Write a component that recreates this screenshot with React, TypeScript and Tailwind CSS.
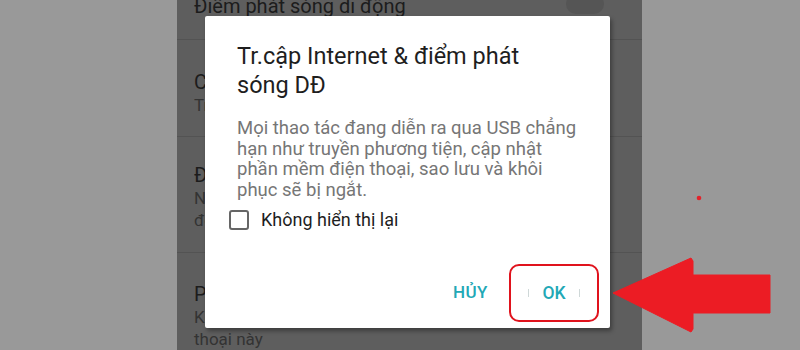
const rows = [
  { title: "Chia sẻ kết nối qua USB", sub: ["Truy cập Internet qua cáp USB"], h: "h-[97px]", pt: "pt-[30px]" },
  { title: "Điểm phát sóng Bluetooth", sub: ["Nhận kết nối Internet của điện thoại", "để dùng trên thiết bị khác"], h: "h-[116px]", pt: "pt-[26px]" },
];

const App = () => {
  return (
    <div
      className="relative flex w-[800px] h-[350px] overflow-hidden bg-[#989898]"
      style={{ fontFamily: "Roboto, 'Noto Sans', sans-serif" }}
    >
      <div className="w-[177px] shrink-0 bg-[#999999]" />

      {/* phone screen with dim overlay */}
      <div className="relative w-[465px] shrink-0 bg-[#5e5e5e] overflow-hidden">
        <div className="flex flex-col">
          <div className="relative h-[40px] border-b border-[#535353] pl-[17px]">
            <div className="-mt-[7px] text-[20px] leading-[26px] text-[#1c1c1c]">Điểm phát sóng di động</div>
            <div className="absolute right-[38px] -top-[6px] w-[38px] h-[20px] rounded-full bg-[#555555]" />
          </div>
          {rows.map((r) => (
            <div key={r.title} className={`${r.h} ${r.pt} border-b border-[#535353] pl-[17px]`}>
              <div className="w-[11px] overflow-hidden whitespace-nowrap">
                <div className="text-[20px] leading-[24px] text-[#1c1c1c]">{r.title}</div>
                {r.sub.map((s) => (
                  <div key={s} className="text-[17px] leading-[22px] text-[#333333]">{s}</div>
                ))}
              </div>
            </div>
          ))}
          <div className="h-[110px] pt-[29px] pl-[17px]">
            <div className="w-[11px] overflow-hidden whitespace-nowrap">
              <div className="text-[20px] leading-[24px] text-[#1c1c1c]">Phạm vi điểm phát sóng</div>
              <div className="text-[17px] leading-[22px] text-[#333333]">Kết nối Internet qua điện</div>
            </div>
            <div className="text-[17px] leading-[22px] text-[#333333]">thoại này</div>
          </div>
        </div>

        {/* dialog */}
        <div className="absolute left-[28px] top-[16px] w-[405px] h-[312px] bg-white rounded-[2px] shadow-[2px_3px_4px_rgba(0,0,0,0.35)] flex flex-col">
          <div className="pl-[32px] pt-[26px] text-[23.5px] leading-[29px] text-[#1e1e1e]">
            Tr.cập Internet &amp; điểm phát
            <br />
            sóng DĐ
          </div>
          <div className="pl-[32px] pt-[18px] text-[18.5px] leading-[20.5px] text-[#767676]">
            Mọi thao tác đang diễn ra qua USB chẳng
            <br />
            hạn như truyền phương tiện, cập nhật
            <br />
            phần mềm điện thoại, sao lưu và khôi
            <br />
            phục sẽ bị ngắt.
          </div>
          <div className="flex items-center pl-[24px] pt-[9px]">
            <div className="w-[20px] h-[20px] rounded-[3px] border-2 border-[#666666]" />
            <span className="ml-[12px] text-[18px] leading-[22px] text-[#1e1e1e]">Không hiển thị lại</span>
          </div>
          <div className="mt-auto flex items-center justify-end pr-[11px] pb-[6px]">
            <button className="text-[17px] font-medium tracking-[0.5px] text-[#22a8b6]">HỦY</button>
            <button className="ml-[21px] w-[90px] h-[58px] rounded-[10px] border-[2.5px] border-[#e0131d] flex items-center justify-center gap-[13px]">
              <span className="w-px h-[8px] bg-[#cfd8d8]" />
              <span className="text-[17.5px] font-medium text-[#22a8b6]">OK</span>
              <span className="w-px h-[8px] bg-[#cfd8d8]" />
            </button>
          </div>
        </div>
      </div>

      <div className="flex-1 bg-[#999999]" />

      {/* annotation arrow */}
      <svg className="absolute left-0 top-0" width="800" height="350" viewBox="0 0 800 350">
        <polygon
          points="613,293 691,258 693,261 693,275 770,275 770,313 693,313 693,329 691,332"
          fill="#ec1c24"
          stroke="#ec1c24"
          strokeWidth="1"
          strokeLinejoin="round"
        />
        <circle cx="699" cy="198" r="2.3" fill="#e3222a" />
      </svg>
    </div>
  );
};

export default App;
